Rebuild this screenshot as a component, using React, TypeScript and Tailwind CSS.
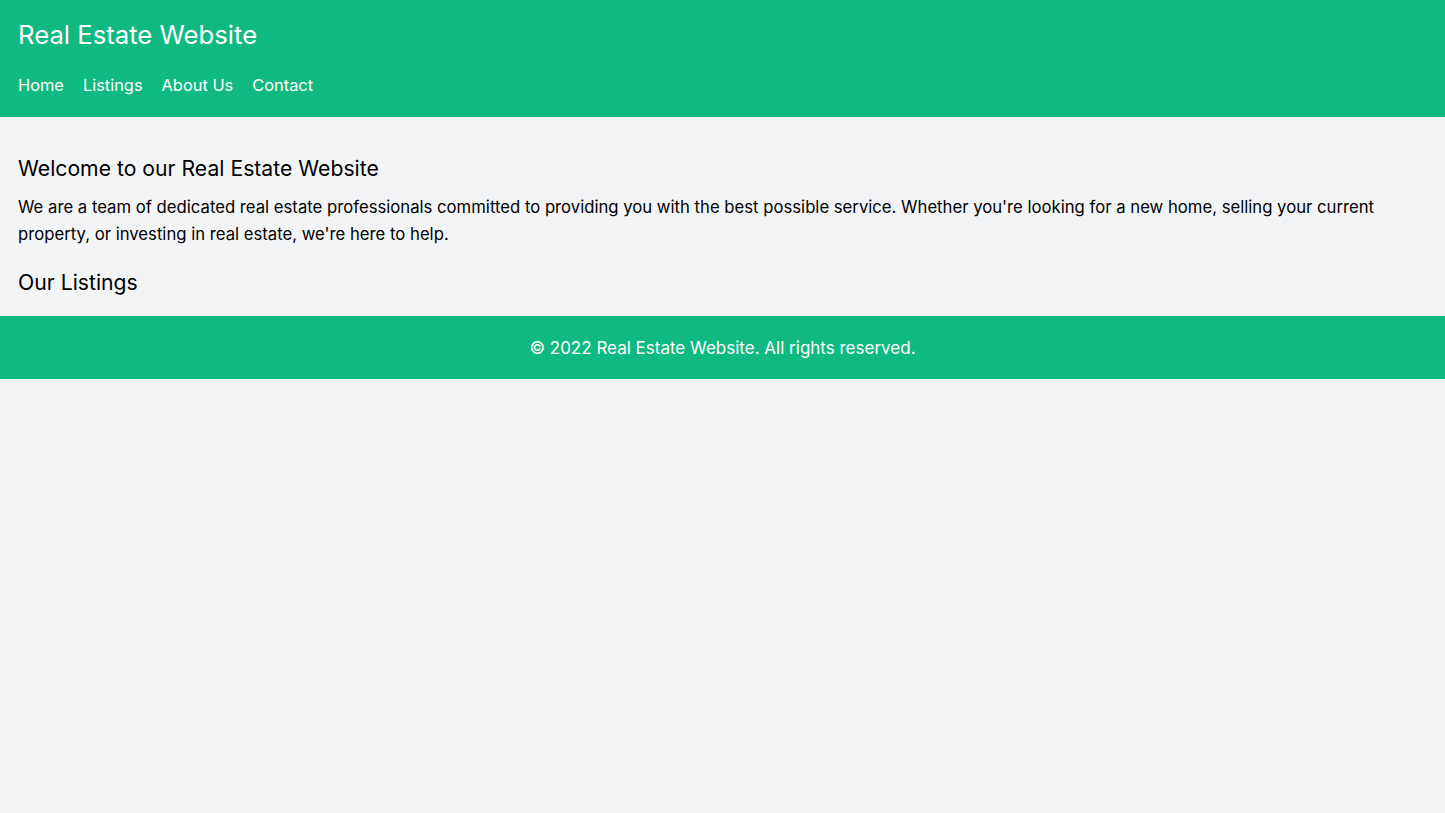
export default function App() {
  return (
    <div className="min-h-screen bg-[#f3f4f6] text-black" style={{ fontFamily: 'Inter, "Liberation Sans", sans-serif' }}>
      <header className="bg-[#10b981] px-[18px] pt-4 pb-5 text-white">
        <h1 className="text-[25.7px] leading-[37px]">Real Estate Website</h1>
        <nav className="mt-5 flex gap-[19px] text-[16.4px] leading-6">
          <a href="#">Home</a>
          <a href="#">Listings</a>
          <a href="#">About Us</a>
          <a href="#">Contact</a>
        </nav>
      </header>
      <main className="px-[18px] pt-[37px] pb-5">
        <h2 className="text-[21.2px] leading-7">Welcome to our Real Estate Website</h2>
        <p className="mt-3 text-[16.7px] leading-[27px]">
          We are a team of dedicated real estate professionals committed to providing you with the best possible service. Whether you're looking for a new home, selling your current property, or investing in real estate, we're here to help.
        </p>
        <h2 className="mt-5 text-[21.2px] leading-7">Our Listings</h2>
      </main>
      <footer className="bg-[#10b981] pt-5 pb-[19px] text-center text-[17px] leading-6 text-white">
        © 2022 Real Estate Website. All rights reserved.
      </footer>
    </div>
  );
}
